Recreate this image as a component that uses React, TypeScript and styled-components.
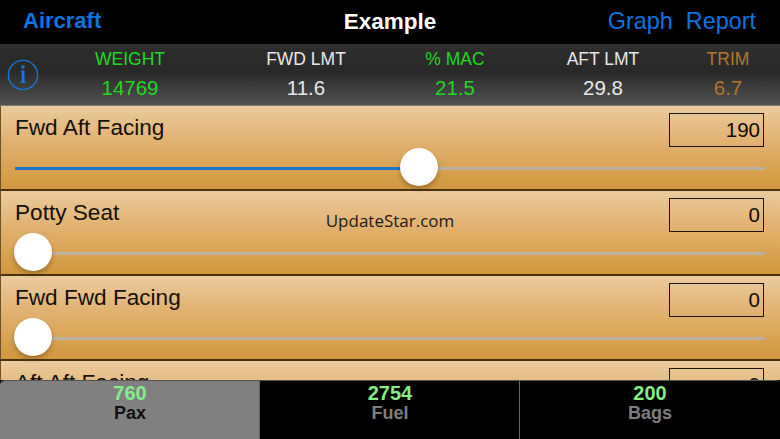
import React from "react";
import styled, { createGlobalStyle } from "styled-components";

const GlobalStyle = createGlobalStyle`
  html, body {
    margin: 0;
    padding: 0;
    background: #000;
  }
  * {
    box-sizing: border-box;
  }
`;

const Page = styled.div`
  position: relative;
  width: 780px;
  height: 439px;
  display: flex;
  flex-direction: column;
  overflow: hidden;
  background: #000;
  font-family: "Liberation Sans", Arial, sans-serif;
`;

const NavBar = styled.div`
  height: 44px;
  flex: none;
  display: flex;
  align-items: center;
  justify-content: space-between;
  padding: 0 24px 2px 23px;
  background: #000;
`;

const NavTitle = styled.div`
  position: absolute;
  left: 0;
  right: 0;
  top: 8px;
  text-align: center;
  color: #fff;
  font-size: 22.5px;
  font-weight: 700;
  line-height: 28px;
`;

const NavLink = styled.span<{ $bold?: boolean }>`
  color: #0a74e0;
  font-size: ${(props) => (props.$bold ? 22 : 23.4)}px;
  line-height: 28px;
  font-weight: ${(props) => (props.$bold ? 700 : 400)};
`;

const NavRight = styled.div`
  display: flex;
  gap: 13px;
`;

const StatsBar = styled.div`
  height: 62px;
  flex: none;
  display: flex;
  padding-left: 1px;
  background: linear-gradient(#2e2e2e 0%, #292929 45%, #525252 100%);
  border-bottom: 1px solid #777;
`;

const InfoButton = styled.div`
  width: 45px;
  flex: none;
  display: flex;
  align-items: center;
  padding: 1px 0 0 6px;
`;

const StatCell = styled.div<{ $width: number }>`
  width: ${(props) => props.$width}px;
  flex: none;
  display: flex;
  flex-direction: column;
  align-items: center;
  padding-top: 5px;
`;

const StatLabel = styled.div<{ $color: string }>`
  color: ${(props) => props.$color};
  font-size: 17.5px;
  line-height: 20px;
  white-space: nowrap;
`;

const StatValue = styled.div<{ $color: string }>`
  color: ${(props) => props.$color};
  font-size: 20.5px;
  line-height: 24px;
  margin-top: 7px;
`;

const List = styled.div`
  flex: 1;
  overflow: hidden;
  display: flex;
  flex-direction: column;
`;

const Row = styled.div`
  height: 85px;
  flex: none;
  padding: 7px 15px 0 15px;
  background: linear-gradient(#ebcb9e 0%, #e1b373 40%, #d2973c 100%);
  border-left: 1px solid #6b5328;
  border-bottom: 2px solid #4a3410;
`;

const RowTop = styled.div`
  display: flex;
  justify-content: space-between;
  height: 34px;
`;

const RowTitle = styled.div`
  color: #151008;
  font-size: 22.6px;
  line-height: 28px;
  margin: 1px 0 0 -1px;
`;

const ValueBox = styled.div`
  width: 95px;
  height: 34px;
  margin-right: 1px;
  border: 1px solid #1c1408;
  color: #100b04;
  font-size: 20.5px;
  line-height: 32px;
  text-align: right;
  padding-right: 3px;
`;

const Track = styled.div`
  position: relative;
  height: 3px;
  margin: 20px 0 0 -1px;
  background: #b9b1a4;
`;

const TrackFill = styled.div`
  height: 100%;
  background: #1b76d2;
`;

const Thumb = styled.div`
  position: absolute;
  top: -19px;
  width: 38px;
  height: 38px;
  margin-left: -19px;
  border-radius: 50%;
  background: #fff;
  box-shadow: 0 3px 5px rgba(0, 0, 0, 0.25);
`;

const Watermark = styled.div`
  position: absolute;
  left: 0;
  right: 0;
  top: 211px;
  text-align: center;
  color: #1a1a1a;
  font-family: "Open Sans", sans-serif;
  font-size: 17px;
  line-height: 20px;
`;

const TabBar = styled.div`
  height: 59px;
  flex: none;
  display: flex;
  background: #000;
  border-top: 1px solid #555;
  border-radius: 5px 5px 0 0;
  overflow: hidden;
`;

const Tab = styled.div<{ $active?: boolean }>`
  flex: 1;
  display: flex;
  flex-direction: column;
  align-items: center;
  padding-top: 1px;
  margin-left: ${(props) => (props.$active ? 0 : -1)}px;
  background: ${(props) => (props.$active ? "#808080" : "#000")};
  border-left: ${(props) => (props.$active ? "none" : "1px solid #666")};
`;

const TabValue = styled.div`
  color: #86ec86;
  font-size: 20px;
  font-weight: 700;
  line-height: 22px;
`;

const TabLabel = styled.div<{ $active?: boolean }>`
  color: ${(props) => (props.$active ? "#111" : "#7e7e7e")};
  font-size: 18px;
  font-weight: 700;
  line-height: 18px;
`;

const stats = [
  { label: "WEIGHT", value: "14769", color: "#1fd81f", width: 168 },
  { label: "FWD LMT", value: "11.6", color: "#e8e8e8", width: 184 },
  { label: "% MAC", value: "21.5", color: "#1fd81f", width: 114 },
  { label: "AFT LMT", value: "29.8", color: "#e8e8e8", width: 182 },
  { label: "TRIM", value: "6.7", color: "#b5762a", width: 68 },
];

const rows = [
  { title: "Fwd Aft Facing", value: "190", pct: 53.9 },
  { title: "Potty Seat", value: "0", pct: 2.4 },
  { title: "Fwd Fwd Facing", value: "0", pct: 2.4 },
  { title: "Aft Aft Facing", value: "0", pct: 2.4 },
];

const tabs = [
  { value: "760", label: "Pax", active: true },
  { value: "2754", label: "Fuel", active: false },
  { value: "200", label: "Bags", active: false },
];

function App() {
  return (
    <Page>
      <GlobalStyle />
      <NavBar>
        <NavLink $bold>Aircraft</NavLink>
        <NavTitle>Example</NavTitle>
        <NavRight>
          <NavLink>Graph</NavLink>
          <NavLink>Report</NavLink>
        </NavRight>
      </NavBar>
      <StatsBar>
        <InfoButton>
          <svg width="32" height="32" viewBox="0 0 32 32">
            <circle cx="16" cy="16" r="14.6" fill="none" stroke="#1677dc" strokeWidth="1.3" />
            <circle cx="16" cy="8" r="1.8" fill="#1677dc" />
            <path d="M13.6 11.4h3.9v11.2h1.4v1.4h-5.5v-1.4h1.3v-9.8h-1.1z" fill="#1677dc" />
          </svg>
        </InfoButton>
        {stats.map((stat) => (
          <StatCell key={stat.label} $width={stat.width}>
            <StatLabel $color={stat.color}>{stat.label}</StatLabel>
            <StatValue $color={stat.color}>{stat.value}</StatValue>
          </StatCell>
        ))}
      </StatsBar>
      <List>
        {rows.map((row) => (
          <Row key={row.title}>
            <RowTop>
              <RowTitle>{row.title}</RowTitle>
              <ValueBox>{row.value}</ValueBox>
            </RowTop>
            <Track>
              <TrackFill style={{ width: `${row.pct}%` }} />
              <Thumb style={{ left: `${row.pct}%` }} />
            </Track>
          </Row>
        ))}
      </List>
      <TabBar>
        {tabs.map((tab) => (
          <Tab key={tab.label} $active={tab.active}>
            <TabValue>{tab.value}</TabValue>
            <TabLabel $active={tab.active}>{tab.label}</TabLabel>
          </Tab>
        ))}
      </TabBar>
      <Watermark>UpdateStar.com</Watermark>
    </Page>
  );
}

export default App;
